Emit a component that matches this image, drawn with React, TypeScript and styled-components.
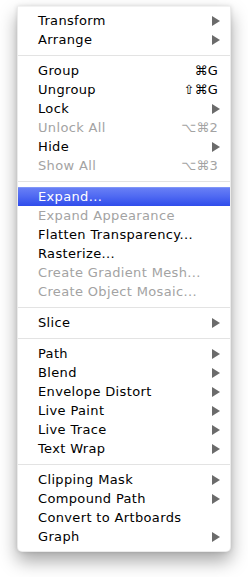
import styled, { createGlobalStyle } from 'styled-components';

const GlobalStyle = createGlobalStyle`
    html, body {
        margin: 0;
        padding: 0;
        background: #ffffff;
    }
    body {
        font-family: "DejaVu Sans", "Liberation Sans", sans-serif;
    }
`;

const Page = styled.div`
    width: 248px;
    height: 577px;
    padding: 6px 0 0 17px;
    box-sizing: border-box;
`;

const Menu = styled.ul`
    list-style: none;
    margin: 0;
    padding: 4px 0 5px;
    width: 214px;
    box-sizing: border-box;
    background: #ffffff;
    border: 1px solid rgba(0, 0, 0, 0.08);
    border-top-color: rgba(0, 0, 0, 0.05);
    border-radius: 0 0 5px 5px;
    box-shadow: 0 9px 18px rgba(0, 0, 0, 0.35), 0 0 4px rgba(0, 0, 0, 0.12);

    display: flex;
    flex-direction: column;
`;

const Item = styled.li<{ $disabled?: boolean; $active?: boolean }>`
    height: 19px;
    display: flex;
    align-items: center;
    justify-content: space-between;
    padding: 0 10px 0 20px;
    font-size: 13px;
    letter-spacing: 0.35px;
    color: ${(p) => (p.$active ? '#ffffff' : p.$disabled ? '#a3a3a3' : '#000000')};
    background: ${(p) =>
        p.$active ? 'linear-gradient(to bottom, #6b82f6 0%, #4f69f2 50%, #2f4ceb 100%)' : 'transparent'};
    box-shadow: ${(p) => (p.$active ? 'inset 0 1px 0 #8096f7' : 'none')};
    white-space: nowrap;
`;

const Label = styled.span`
    display: block;
`;

const Shortcut = styled.span<{ $disabled?: boolean }>`
    font-size: 13px;
    letter-spacing: 0.2px;
    margin-right: 2px;
    color: ${(p) => (p.$disabled ? '#a3a3a3' : '#000000')};
`;

const Arrow = styled.span`
    width: 0;
    height: 0;
    border-top: 5px solid transparent;
    border-bottom: 5px solid transparent;
    border-left: 8px solid #6b6b6b;
`;

const Separator = styled.li`
    height: 12px;
    display: flex;
    align-items: center;

    &::after {
        content: '';
        flex: 1;
        height: 1px;
        background: #e3e3e3;
    }
`;

type Entry =
    | { sep: true }
    | { label: string; sub?: boolean; key?: string; disabled?: boolean; active?: boolean };

const entries: Entry[] = [
    { label: 'Transform', sub: true },
    { label: 'Arrange', sub: true },
    { sep: true },
    { label: 'Group', key: '⌘G' },
    { label: 'Ungroup', key: '⇧⌘G' },
    { label: 'Lock', sub: true },
    { label: 'Unlock All', key: '⌥⌘2', disabled: true },
    { label: 'Hide', sub: true },
    { label: 'Show All', key: '⌥⌘3', disabled: true },
    { sep: true },
    { label: 'Expand...', active: true },
    { label: 'Expand Appearance', disabled: true },
    { label: 'Flatten Transparency...' },
    { label: 'Rasterize...' },
    { label: 'Create Gradient Mesh...', disabled: true },
    { label: 'Create Object Mosaic...', disabled: true },
    { sep: true },
    { label: 'Slice', sub: true },
    { sep: true },
    { label: 'Path', sub: true },
    { label: 'Blend', sub: true },
    { label: 'Envelope Distort', sub: true },
    { label: 'Live Paint', sub: true },
    { label: 'Live Trace', sub: true },
    { label: 'Text Wrap', sub: true },
    { sep: true },
    { label: 'Clipping Mask', sub: true },
    { label: 'Compound Path', sub: true },
    { label: 'Convert to Artboards' },
    { label: 'Graph', sub: true },
];

const App = () => {
    return (
        <>
            <GlobalStyle />
            <Page>
                <Menu>
                    {entries.map((e, i) =>
                        'sep' in e ? (
                            <Separator key={i} />
                        ) : (
                            <Item key={i} $disabled={e.disabled} $active={e.active}>
                                <Label>{e.label}</Label>
                                {e.sub && <Arrow />}
                                {e.key && <Shortcut $disabled={e.disabled}>{e.key}</Shortcut>}
                            </Item>
                        )
                    )}
                </Menu>
            </Page>
        </>
    );
};

export default App;
